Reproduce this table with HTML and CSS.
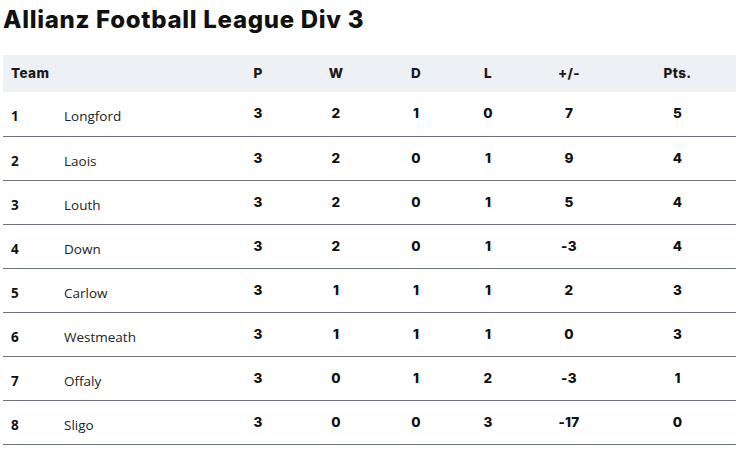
FILE: index.html
```html
<!DOCTYPE html>
<html lang="en">
<head>
<meta charset="utf-8">
<title>Allianz Football League Div 3</title>
<link rel="stylesheet" href="styles.css">
</head>
<body>
<h1 class="title">Allianz Football League Div 3</h1>
<table class="league">
  <colgroup>
    <col class="c-rank"><col class="c-team"><col class="c-p"><col class="c-w"><col class="c-d"><col class="c-l"><col class="c-gd"><col class="c-pts">
  </colgroup>
  <thead>
    <tr>
      <th class="team-h" colspan="2">Team</th>
      <th>P</th><th>W</th><th>D</th><th>L</th><th>+/-</th><th>Pts.</th>
    </tr>
  </thead>
  <tbody>
    <tr><td class="rank">1</td><td class="team">Longford</td><td>3</td><td>2</td><td>1</td><td>0</td><td>7</td><td>5</td></tr>
    <tr><td class="rank">2</td><td class="team">Laois</td><td>3</td><td>2</td><td>0</td><td>1</td><td>9</td><td>4</td></tr>
    <tr><td class="rank">3</td><td class="team">Louth</td><td>3</td><td>2</td><td>0</td><td>1</td><td>5</td><td>4</td></tr>
    <tr><td class="rank">4</td><td class="team">Down</td><td>3</td><td>2</td><td>0</td><td>1</td><td>-3</td><td>4</td></tr>
    <tr><td class="rank">5</td><td class="team">Carlow</td><td>3</td><td>1</td><td>1</td><td>1</td><td>2</td><td>3</td></tr>
    <tr><td class="rank">6</td><td class="team">Westmeath</td><td>3</td><td>1</td><td>1</td><td>1</td><td>0</td><td>3</td></tr>
    <tr><td class="rank">7</td><td class="team">Offaly</td><td>3</td><td>0</td><td>1</td><td>2</td><td>-3</td><td>1</td></tr>
    <tr><td class="rank">8</td><td class="team">Sligo</td><td>3</td><td>0</td><td>0</td><td>3</td><td>-17</td><td>0</td></tr>
  </tbody>
</table>
</body>
</html>
```
FILE: styles.css
```css
html, body {
  margin: 0;
  padding: 0;
  background: #fff;
}
body {
  padding: 0 10px 0 3px;
  color: #111;
  font-family: "Inter", "Liberation Sans", sans-serif;
}
.title {
  margin: 0;
  padding-top: 5px;
  height: 55px;
  box-sizing: border-box;
  font-size: 24px;
  font-weight: 800;
  line-height: 30px;
  letter-spacing: 0.7px;
  color: #111;
}
.league {
  width: 733px;
  border-collapse: collapse;
  table-layout: fixed;
}
.c-rank { width: 61px; }
.c-team { width: 155px; }
.c-p { width: 78px; }
.c-w { width: 78px; }
.c-d { width: 82px; }
.c-l { width: 62px; }
.c-gd { width: 100px; }
.c-pts { width: 117px; }
.league thead tr {
  background: #edf0f4;
}
.league th {
  box-sizing: border-box;
  height: 37px;
  padding: 0 0 1px 0;
  font-size: 13.5px;
  font-weight: 800;
  letter-spacing: 0.4px;
  text-align: center;
  color: #1a1a1a;
  vertical-align: middle;
}
.league th.team-h {
  text-align: left;
  padding-left: 8px;
}
.league tbody tr {
  border-bottom: 1px solid #6c737a;
}
.league td {
  box-sizing: border-box;
  height: 44px;
  padding: 0 0 1px 0;
  font-size: 13.5px;
  font-weight: 800;
  letter-spacing: 0.3px;
  text-align: center;
  color: #111;
  vertical-align: middle;
}
.league td.rank {
  text-align: left;
  padding: 5px 0 0 8px;
  font-family: "Open Sans", "Liberation Sans", sans-serif;
  font-size: 13.5px;
  font-weight: 700;
  letter-spacing: 0;
}
.league td.team {
  text-align: left;
  padding: 5px 0 0 0;
  font-family: "Open Sans", "Liberation Sans", sans-serif;
  font-size: 13.5px;
  font-weight: 400;
  letter-spacing: 0;
  color: #222;
}
```
